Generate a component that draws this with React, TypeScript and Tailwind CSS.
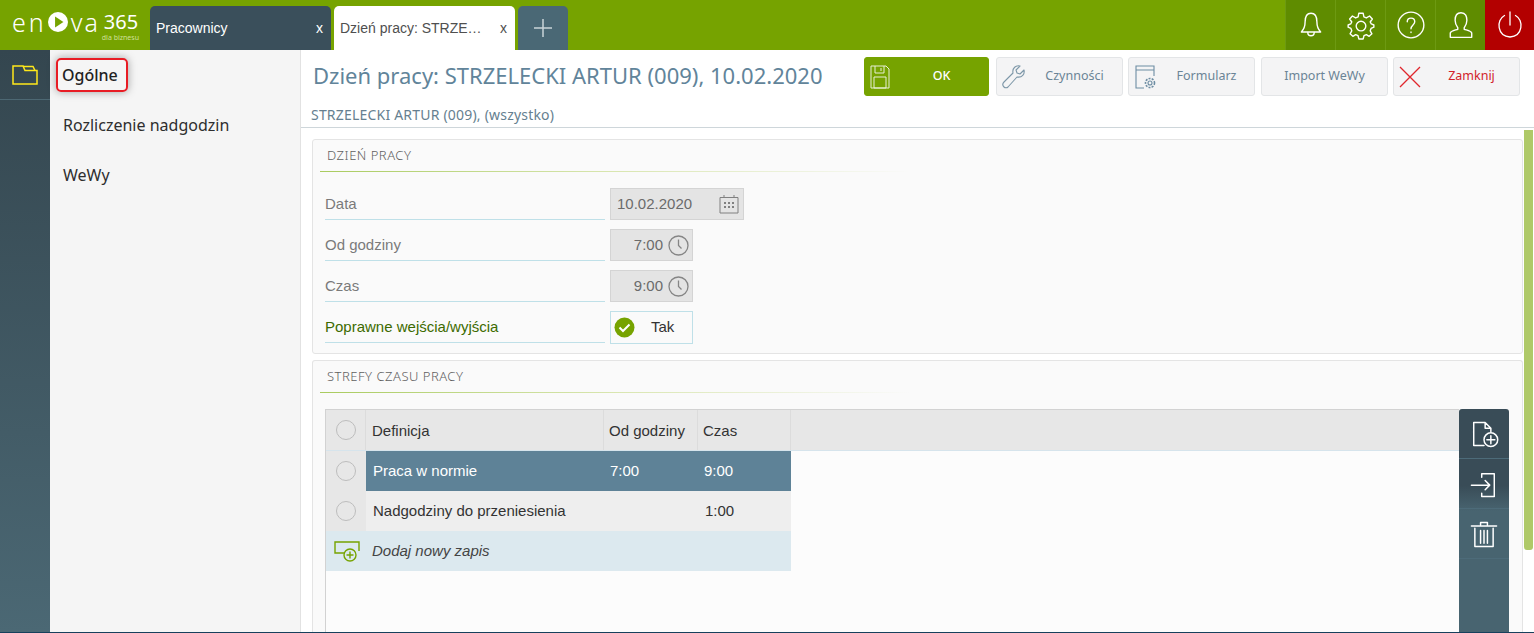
import type { ReactNode } from "react";

const arial = "font-['Liberation_Sans',Arial,sans-serif]";
const fira = "font-['Noto_Sans',sans-serif]";

function Logo() {
  return (
    <div className="w-[150px] shrink-0 pl-[12px] pt-[10px] text-white">
      <div className="flex items-center h-[24px]">
        <span className={`${fira} text-[25px] leading-[24px] tracking-[3px] font-light`}>en</span>
        <svg width="20" height="20" viewBox="0 0 24 24" className="ml-[1px] mr-[3px]">
          <circle cx="12" cy="12" r="12" fill="#fff" />
          <path d="M8.5 5.5 L18.5 12 L8.5 18.5 Z" fill="#76a300" />
        </svg>
        <span className={`${fira} text-[25px] leading-[24px] tracking-[2px] font-light`}>va</span>
        <span className={`${fira} text-[20px] leading-[24px] ml-[4px]`}>365</span>
      </div>
      <div className={`${fira} text-[7px] leading-[8px] text-right pr-[11px] text-[#cfe09a]`}>dla biznesu</div>
    </div>
  );
}

function TopIcon({ children }: { children: ReactNode }) {
  return (
    <div className="w-[50px] h-[50px] bg-[#5f8c00] border-l border-[#6d9a12] flex items-center justify-center">
      <svg width="30" height="30" viewBox="0 0 28 28" fill="none" stroke="#fff" strokeWidth="1.3" strokeLinecap="round" strokeLinejoin="round">
        {children}
      </svg>
    </div>
  );
}

function ActionButton({ label, icon, className = "" }: { label: string; icon?: ReactNode; className?: string }) {
  return (
    <div className={`${fira} h-[39px] rounded-[3px] border border-[#e3e5e7] bg-[#f4f4f5] flex items-center text-[12.5px] text-[#6b8496] ${className}`}>
      {icon && <div className="w-[40px] shrink-0 pl-[5px] flex items-center">{icon}</div>}
      <span className={`flex-1 text-center whitespace-nowrap ${icon ? "pr-[10px]" : ""}`}>{label}</span>
    </div>
  );
}

function SectionTitle({ children }: { children: string }) {
  return (
    <div className="px-[7px]">
      <div className={`${fira} h-[31px] pl-[7px] flex items-center text-[13px] font-light text-[#5f5f5f] tracking-[0.5px]`}>{children}</div>
      <div className="h-px bg-gradient-to-r from-[#a9cb5e] via-[#d9e6b0] to-transparent w-[590px]" />
    </div>
  );
}

function FieldRow({ label, children, green }: { label: string; children: ReactNode; green?: boolean }) {
  return (
    <div className="flex h-[33px] mb-[8px] pl-[12px]">
      <div className={`${arial} w-[280px] h-[32px] border-b border-[#bfe0e8] text-[15px] leading-[31px] ${green ? "text-[#3d6b00]" : "text-[#7a7a7a]"}`}>
        {label}
      </div>
      <div className="ml-[5px]">{children}</div>
    </div>
  );
}

function Clock() {
  return (
    <svg width="21" height="21" viewBox="0 0 21 21" fill="none" stroke="#858585" strokeWidth="1.3">
      <circle cx="10.5" cy="10.5" r="9.5" />
      <path d="M10.5 4.5 V10.5 L13.5 13.5" />
    </svg>
  );
}

function TimeInput({ value }: { value: string }) {
  return (
    <div className={`${arial} w-[83px] h-[32px] bg-[#e4e4e4] border border-[#d4d4d4] flex items-center justify-end pr-[3px] gap-[5px] text-[15px] text-[#6b6b6b]`}>
      {value}
      <Clock />
    </div>
  );
}

function Radio() {
  return <div className="w-[20px] h-[20px] rounded-full border-[1.5px] border-[#bdbdbd]" />;
}

function HeadCell({ label, className }: { label: string; className: string }) {
  return (
    <div className={`h-full flex items-center border-r border-[#dcdcdc] pt-[3px] ${className}`}>{label}</div>
  );
}

function SideAction({ children }: { children: ReactNode }) {
  return (
    <div className="h-[50px] border-b border-[#4d6b79] flex items-center justify-center">
      <svg width="32" height="32" viewBox="0 0 28 28" fill="none" stroke="#fff" strokeWidth="1.3" strokeLinecap="round" strokeLinejoin="round">
        {children}
      </svg>
    </div>
  );
}

export default function App() {
  return (
    <div className="w-[1534px] h-[633px] overflow-hidden flex flex-col bg-white">
      {/* top bar */}
      <header className="h-[50px] shrink-0 bg-[#76a300] flex">
        <Logo />
        <div className={`${arial} w-[181px] h-[44px] mt-[6px] rounded-t-[5px] bg-[#3a4f5b] text-white text-[14px] flex items-center pl-[6px] pr-[8px] justify-between`}>
          <span>Pracownicy</span>
          <span>x</span>
        </div>
        <div className={`${arial} w-[181px] h-[44px] mt-[6px] ml-[3px] rounded-t-[5px] bg-white text-[#4f4f4f] text-[14px] flex items-center pl-[6px] pr-[8px] justify-between`}>
          <span>Dzień pracy: STRZE…</span>
          <span>x</span>
        </div>
        <div className="w-[50px] h-[44px] mt-[6px] ml-[3px] rounded-t-[5px] bg-[#4a6875] flex items-center justify-center">
          <svg width="20" height="20" viewBox="0 0 20 20" stroke="#c9d3d8" strokeWidth="1.5">
            <path d="M10 1 V19 M1 10 H19" />
          </svg>
        </div>
        <div className="flex-1" />
        <TopIcon>
          <path d="M14 3 C9.5 3 8.5 7 8.5 11 C8.5 15 7.5 18 5 20.5 H23 C20.5 18 19.5 15 19.5 11 C19.5 7 18.5 3 14 3 Z" />
          <path d="M11 21 C11 25 17 25 17 21" />
        </TopIcon>
        <TopIcon>
          <path d="M12 3 H16 L16.7 6.4 L19 7.4 L22 5.6 L24.6 8.4 L22.6 11.2 L23.6 13 L26 14 V16 L23.4 17.2 L22.6 19.4 L24.2 22.2 L21.6 24.6 L19 23 L16.8 24 L16 27 H12 L11.2 24 L9 23 L6.4 24.6 L3.8 22.2 L5.4 19.4 L4.6 17.2 L2 16 V14 L4.4 13 L5.4 11.2 L3.4 8.4 L6 5.6 L9 7.4 L11.3 6.4 Z" />
          <circle cx="14" cy="15" r="4.5" />
        </TopIcon>
        <TopIcon>
          <circle cx="14" cy="14" r="12" />
          <path d="M10.5 11 C10.5 6.5 17.5 6.5 17.5 11 C17.5 14 14 14 14 17.5" />
          <path d="M14 20.5 V21" />
        </TopIcon>
        <TopIcon>
          <path d="M14 2.5 C9.5 2.5 8.5 6 8.5 9.5 C8.5 13 10 15 11 16.5 V18 C8 19 4.5 19.5 4 21.5 V25.5 H24 V21.5 C23.5 19.5 20 19 17 18 V16.5 C18 15 19.5 13 19.5 9.5 C19.5 6 18.5 2.5 14 2.5 Z" />
        </TopIcon>
        <div className="w-[49px] h-[50px] bg-[#b30000] flex items-center justify-center">
          <svg width="30" height="30" viewBox="0 0 30 30" fill="none" stroke="#fff" strokeWidth="1.3" strokeLinecap="round">
            <path d="M9.5 5.5 C1 10 2 26 15 27 C28 26 29 10 20.5 5.5" />
            <path d="M15 2 V15" />
          </svg>
        </div>
      </header>

      <div className="flex-1 min-h-0 flex">
        {/* left rail */}
        <aside className="w-[50px] shrink-0 bg-gradient-to-b from-[#34464f] to-[#4b6874]">
          <div className="h-[50px] border-b border-[#4d6873] flex items-center justify-center">
            <svg width="26" height="20" viewBox="0 0 26 20" fill="none" stroke="#ffe81a" strokeWidth="1.5">
              <path d="M1 1 H11 L13 5.5 H25 V19 H1 Z" />
              <path d="M11 1.5 H21 L23 5.5" />
            </svg>
          </div>
        </aside>

        {/* sections list */}
        <nav className={`${fira} w-[251px] shrink-0 bg-[#f5f5f5] border-r border-[#e2e2e2] text-[16px] text-[#2e2e2e]`}>
          <div className="h-[50px] pl-[6px] pt-[8px]">
            <div className="w-[72px] h-[34px] rounded-[5px] border-2 border-[#e81c24] shadow-[0_0_8px_rgba(0,0,0,0.35)] flex items-center pl-[4px] font-medium text-[#1f1f1f]">
              Ogólne
            </div>
          </div>
          <div className="h-[50px] pl-[13px] flex items-center">Rozliczenie nadgodzin</div>
          <div className="h-[50px] pl-[13px] flex items-center">WeWy</div>
        </nav>

        {/* main */}
        <main className="flex-1 min-w-0 flex flex-col">
          <div className="h-[78px] shrink-0 border-b border-[#ced6da] flex flex-col">
            <div className="flex h-[56px]">
              <h1 className={`${fira} w-[563px] pl-[12px] pt-[8px] text-[22px] leading-[34px] text-[#61849a] whitespace-nowrap`}>
                Dzień pracy: STRZELECKI ARTUR (009), 10.02.2020
              </h1>
              <div className="flex pt-[7px]">
                <ActionButton
                  label="OK"
                  className="w-[125px] !bg-[#76a300] !border-[#76a300] !text-white font-medium"
                  icon={
                    <svg width="20" height="24" viewBox="0 0 20 24" fill="none" stroke="#e8efd6" strokeWidth="1">
                      <path d="M1 1 H16 L19 4 V23 H1 Z" />
                      <path d="M5 1 V8 H14 V1 M11 3 V6 M4 12 H16 V23 H4 Z" />
                    </svg>
                  }
                />
                <ActionButton
                  label="Czynności"
                  className="w-[127px] ml-[7px]"
                  icon={
                    <svg width="24" height="24" viewBox="0 0 24 24" fill="none" stroke="#7d97a8" strokeWidth="1.1" strokeLinejoin="round">
                      <path d="M22 5 L18 9 L15 8 L14 5 L18 1 C14 0 10 3 11 8 L2 17 C0 19 1 21 2 22 C3 23 5 23 6 22 L15 12 C20 13 23 9 22 5 Z" />
                    </svg>
                  }
                />
                <ActionButton
                  label="Formularz"
                  className="w-[127px] ml-[5px]"
                  icon={
                    <svg width="24" height="26" viewBox="0 0 24 26" fill="none" stroke="#6d8da3" strokeWidth="1.1">
                      <path d="M20 12 V2 H2 V24 H10 M2 6 H20" />
                      <circle cx="16" cy="19" r="2" />
                      <circle cx="16" cy="19" r="4.5" strokeDasharray="2 1.2" strokeWidth="1.6" />
                    </svg>
                  }
                />
                <ActionButton label="Import WeWy" className="w-[127px] ml-[6px]" />
                <ActionButton
                  label="Zamknij"
                  className="w-[127px] ml-[5px] !text-[#d2232a]"
                  icon={
                    <svg width="22" height="22" viewBox="0 0 22 22" stroke="#e0262d" strokeWidth="1.3">
                      <path d="M1 1 L21 21 M21 1 L1 21" />
                    </svg>
                  }
                />
              </div>
            </div>
            <div className={`${fira} pl-[10px] text-[14px] leading-[18px] tracking-[0.2px] text-[#667f90]`}>STRZELECKI ARTUR (009), (wszystko)</div>
          </div>

          <div className="flex-1 min-h-0 flex">
            <div className="flex-1 min-w-0 pl-[11px] pt-[11px] flex flex-col gap-[6px]">
              {/* panel 1 */}
              <section className="h-[215px] shrink-0 rounded-[3px] border border-[#e4e4e4] bg-[#fafafa]">
                <SectionTitle>DZIEŃ PRACY</SectionTitle>
                <div className="pt-[16px]">
                  <FieldRow label="Data">
                    <div className={`${arial} w-[134px] h-[32px] bg-[#e4e4e4] border border-[#d4d4d4] flex items-center justify-between pl-[6px] pr-[4px] text-[15px] text-[#6b6b6b]`}>
                      10.02.2020
                      <svg width="20" height="20" viewBox="0 0 20 20" fill="none" stroke="#808080" strokeWidth="1">
                        <path d="M1 3.5 H19 V19 H1 Z M5 1 V3.5 M15 1 V3.5" />
                        <path d="M5 9 H7 M9 9 H11 M13 9 H15 M5 13 H7 M9 13 H11 M13 13 H15" strokeWidth="2" />
                      </svg>
                    </div>
                  </FieldRow>
                  <FieldRow label="Od godziny">
                    <TimeInput value="7:00" />
                  </FieldRow>
                  <FieldRow label="Czas">
                    <TimeInput value="9:00" />
                  </FieldRow>
                  <FieldRow label="Poprawne wejścia/wyjścia" green>
                    <div className={`${arial} w-[83px] h-[33px] border border-[#bfe0e8] flex items-center pl-[3px] text-[15px] text-[#333]`}>
                      <svg width="21" height="21" viewBox="0 0 21 21">
                        <circle cx="10.5" cy="10.5" r="10" fill="#76a300" />
                        <path d="M5.5 10.5 L9 14 L15.5 7.5" fill="none" stroke="#fff" strokeWidth="2" />
                      </svg>
                      <span className="ml-[16px]">Tak</span>
                    </div>
                  </FieldRow>
                </div>
              </section>

              {/* panel 2 */}
              <section className="flex-1 min-h-0 rounded-t-[3px] border border-b-0 border-[#e4e4e4] bg-[#fafafa] overflow-hidden">
                <SectionTitle>STREFY CZASU PRACY</SectionTitle>
                <div className="flex pl-[12px] pr-[13px] pt-[16px] h-full">
                  <div className={`${arial} flex-1 min-w-0 border-l border-t border-[#d2d2d2] bg-[#fcfcfc] text-[15px]`}>
                    <div className="h-[41px] bg-[#e7e7e7] border-b border-[#d6e4ec] flex text-[#333]">
                      <div className="w-[40px] h-full border-r border-[#dcdcdc] flex items-center justify-center">
                        <Radio />
                      </div>
                      <HeadCell label="Definicja" className="w-[238px] pl-[6px]" />
                      <HeadCell label="Od godziny" className="w-[94px] pl-[5px]" />
                      <HeadCell label="Czas" className="w-[93px] pl-[5px]" />
                    </div>
                    <div className="h-[40px] flex w-[465px]">
                      <div className="w-[40px] bg-[#e7e7e7] flex items-center justify-center">
                        <Radio />
                      </div>
                      <div className="flex-1 bg-[#5e8297] text-white flex items-center pt-px">
                        <span className="w-[238px] pl-[7px]">Praca w normie</span>
                        <span className="w-[94px] pl-[6px]">7:00</span>
                        <span className="pl-[6px]">9:00</span>
                      </div>
                    </div>
                    <div className="h-[40px] flex w-[465px]">
                      <div className="w-[40px] bg-[#e7e7e7] flex items-center justify-center">
                        <Radio />
                      </div>
                      <div className="flex-1 bg-[#eeeeee] text-[#333] flex items-center pt-px">
                        <span className="w-[238px] pl-[7px] whitespace-nowrap">Nadgodziny do przeniesienia</span>
                        <span className="w-[94px] pl-[6px]" />
                        <span className="pl-[7px]">1:00</span>
                      </div>
                    </div>
                    <div className="h-[40px] w-[465px] bg-[#dce9ef] flex items-center text-[#444] italic pt-px">
                      <div className="w-[40px] flex justify-center pl-[2px]">
                        <svg width="26" height="21" viewBox="0 0 26 21" fill="none" stroke="#76a300" strokeWidth="1.4">
                          <path d="M10 12 H1 V1 H25 V10 M1 1 V3" />
                          <circle cx="16" cy="14" r="6" fill="#dce9ef" />
                          <path d="M16 10.5 V17.5 M12.5 14 H19.5" />
                        </svg>
                      </div>
                      <span className="pl-[6px]">Dodaj nowy zapis</span>
                    </div>
                  </div>
                  <div className="w-[50px] shrink-0 rounded-t-[3px] bg-gradient-to-b from-[#394c57] from-[30%] to-[#486470] to-[40%]">
                    <SideAction>
                      <path d="M15 4 H5 V24 H14 M15 4 V9 H20 M15 4 L20 9 V12" />
                      <circle cx="20" cy="19" r="6" />
                      <path d="M20 15.5 V22.5 M16.5 19 H23.5" />
                    </SideAction>
                    <SideAction>
                      <path d="M12 5 H23 V25 H12 V22 M12 5 V8 M3 15 H19 M15 11 L19 15 L15 19" />
                    </SideAction>
                    <SideAction>
                      <path d="M3 7 H25 M11 6 V4 H17 V6 M6 9 V25 H22 V9 M11 11 V22 M14 11 V22 M17 11 V22" />
                    </SideAction>
                  </div>
                </div>
              </section>
            </div>

            {/* scrollbar */}
            <div className="w-[11px] shrink-0 pl-[1px] pt-[2px]">
              <div className="w-[9px] h-[420px] rounded-b-[3px] bg-[#afc968]" />
            </div>
          </div>
        </main>
      </div>
      <div className="h-px shrink-0 bg-[#17405c]" />
    </div>
  );
}
